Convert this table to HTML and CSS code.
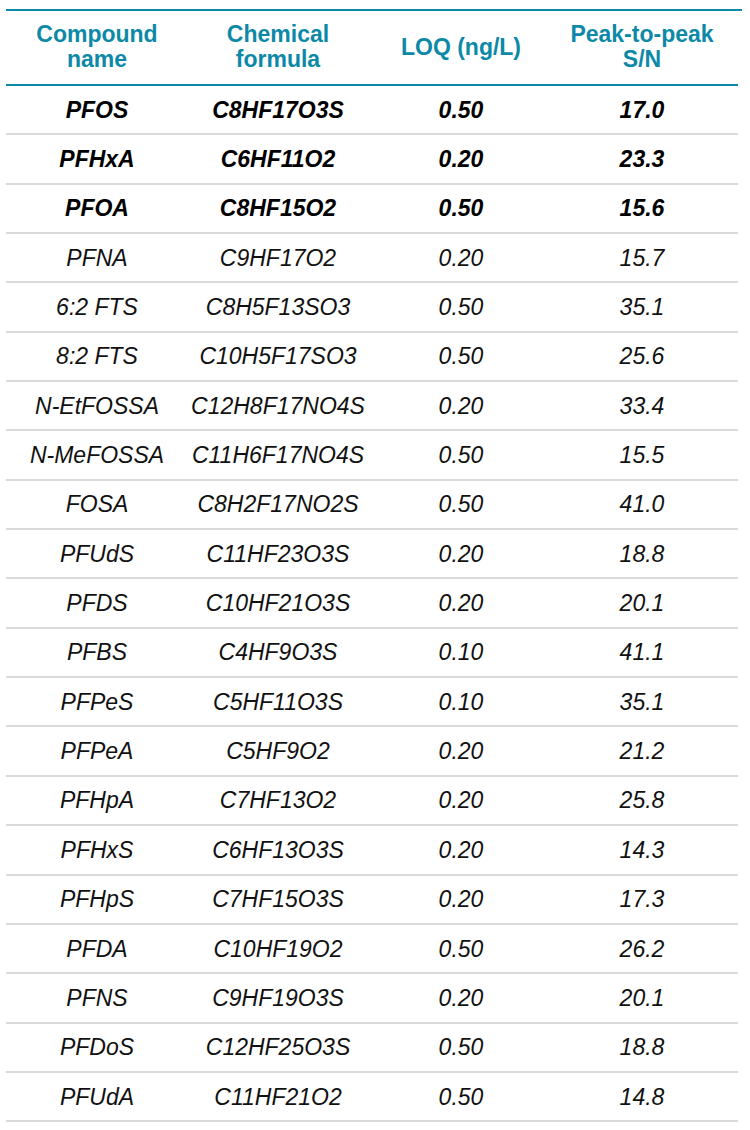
FILE: index.html
```html
<!DOCTYPE html>
<html>
<head>
<meta charset="utf-8">
<link rel="stylesheet" href="styles.css">
</head>
<body>
<div class="wrap">
  <div class="grid">
    <div class="hd">Compound<br>name</div>
    <div class="hd">Chemical<br>formula</div>
    <div class="hd">LOQ (ng/L)</div>
    <div class="hd last">Peak-to-peak<br>S/N</div>

    <div class="c b">PFOS</div><div class="c b">C8HF17O3S</div><div class="c b">0.50</div><div class="c b last">17.0</div>
    <div class="c b">PFHxA</div><div class="c b">C6HF11O2</div><div class="c b">0.20</div><div class="c b last">23.3</div>
    <div class="c b">PFOA</div><div class="c b">C8HF15O2</div><div class="c b">0.50</div><div class="c b last">15.6</div>
    <div class="c">PFNA</div><div class="c">C9HF17O2</div><div class="c">0.20</div><div class="c last">15.7</div>
    <div class="c">6:2 FTS</div><div class="c">C8H5F13SO3</div><div class="c">0.50</div><div class="c last">35.1</div>
    <div class="c">8:2 FTS</div><div class="c">C10H5F17SO3</div><div class="c">0.50</div><div class="c last">25.6</div>
    <div class="c">N-EtFOSSA</div><div class="c">C12H8F17NO4S</div><div class="c">0.20</div><div class="c last">33.4</div>
    <div class="c">N-MeFOSSA</div><div class="c">C11H6F17NO4S</div><div class="c">0.50</div><div class="c last">15.5</div>
    <div class="c">FOSA</div><div class="c">C8H2F17NO2S</div><div class="c">0.50</div><div class="c last">41.0</div>
    <div class="c">PFUdS</div><div class="c">C11HF23O3S</div><div class="c">0.20</div><div class="c last">18.8</div>
    <div class="c">PFDS</div><div class="c">C10HF21O3S</div><div class="c">0.20</div><div class="c last">20.1</div>
    <div class="c">PFBS</div><div class="c">C4HF9O3S</div><div class="c">0.10</div><div class="c last">41.1</div>
    <div class="c">PFPeS</div><div class="c">C5HF11O3S</div><div class="c">0.10</div><div class="c last">35.1</div>
    <div class="c">PFPeA</div><div class="c">C5HF9O2</div><div class="c">0.20</div><div class="c last">21.2</div>
    <div class="c">PFHpA</div><div class="c">C7HF13O2</div><div class="c">0.20</div><div class="c last">25.8</div>
    <div class="c">PFHxS</div><div class="c">C6HF13O3S</div><div class="c">0.20</div><div class="c last">14.3</div>
    <div class="c">PFHpS</div><div class="c">C7HF15O3S</div><div class="c">0.20</div><div class="c last">17.3</div>
    <div class="c">PFDA</div><div class="c">C10HF19O2</div><div class="c">0.50</div><div class="c last">26.2</div>
    <div class="c">PFNS</div><div class="c">C9HF19O3S</div><div class="c">0.20</div><div class="c last">20.1</div>
    <div class="c">PFDoS</div><div class="c">C12HF25O3S</div><div class="c">0.50</div><div class="c last">18.8</div>
    <div class="c">PFUdA</div><div class="c">C11HF21O2</div><div class="c">0.50</div><div class="c last">14.8</div>
  </div>
</div>
</body>
</html>
```
FILE: styles.css
```css
html, body {
  margin: 0;
  padding: 0;
  background: #ffffff;
}
body {
  font-family: "Liberation Sans", Arial, sans-serif;
  color: #111111;
}
.wrap {
  margin: 9px 0 0 6px;
  width: 736px;
  border-top: 2px solid #0d89a8;
}
.grid {
  width: 732px;
  display: grid;
  grid-template-columns: 182px 180px 186px 184px;
  grid-template-rows: 75px;
  grid-auto-rows: 49.35px;
}
.hd {
  box-sizing: border-box;
  display: flex;
  align-items: center;
  justify-content: center;
  text-align: center;
  font-weight: bold;
  font-size: 23px;
  line-height: 25px;
  color: #0d89a8;
  border-bottom: 2px solid #0d89a8;
  padding-bottom: 1px;
}
.c {
  box-sizing: border-box;
  display: flex;
  align-items: center;
  justify-content: center;
  font-size: 23px;
  font-style: italic;
  border-bottom: 2px solid #dadada;
  padding-top: 1px;
}
.b {
  font-weight: bold;
  color: #000000;
}
.last {
  padding-right: 8px;
}
```
